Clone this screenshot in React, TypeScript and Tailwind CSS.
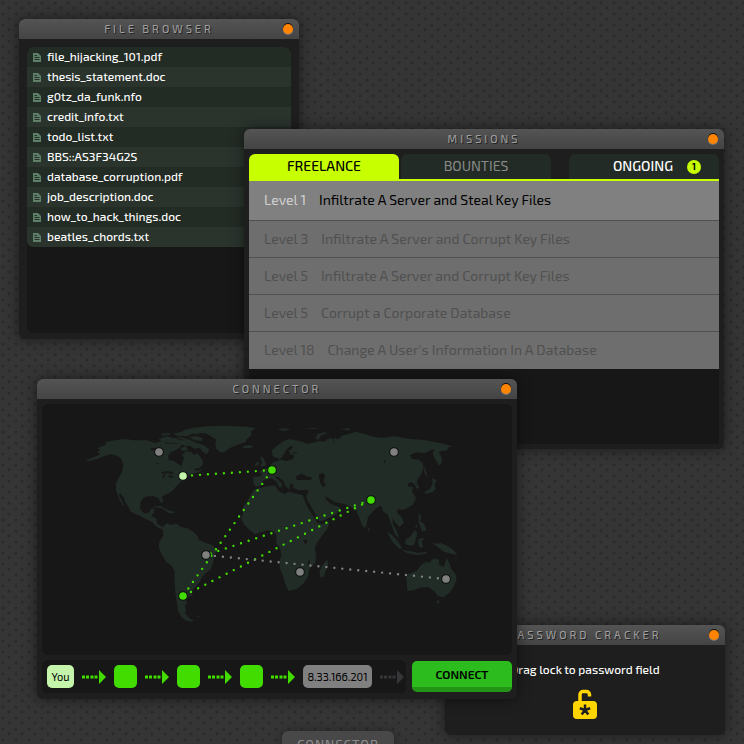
import type { ReactNode } from "react";

const FILES = [
  "file_hijacking_101.pdf",
  "thesis_statement.doc",
  "g0tz_da_funk.nfo",
  "credit_info.txt",
  "todo_list.txt",
  "BBS::AS3F34G2S",
  "database_corruption.pdf",
  "job_description.doc",
  "how_to_hack_things.doc",
  "beatles_chords.txt",
];

const MISSIONS = [
  { level: 1, name: "Infiltrate A Server and Steal Key Files" },
  { level: 3, name: "Infiltrate A Server and Corrupt Key Files" },
  { level: 5, name: "Infiltrate A Server and Corrupt Key Files" },
  { level: 5, name: "Corrupt a Corporate Database" },
  { level: 18, name: "Change A User's Information In A Database" },
];

const GREEN = "#42dc00";
const GRAY = "#808080";

const ROUTES = [
  { from: [141, 72], to: [230, 66], color: GREEN },
  { from: [230, 66], to: [141, 192], color: GREEN },
  { from: [141, 192], to: [329, 96], color: GREEN },
  { from: [329, 96], to: [164, 151], color: GREEN },
  { from: [164, 151], to: [404, 175], color: GRAY },
];

const NODES = [
  { x: 117, y: 48, color: GRAY },
  { x: 352, y: 48, color: GRAY },
  { x: 164, y: 151, color: GRAY },
  { x: 258, y: 168, color: GRAY },
  { x: 404, y: 175, color: GRAY },
  { x: 230, y: 66, color: GREEN },
  { x: 329, y: 96, color: GREEN },
  { x: 141, y: 192, color: GREEN },
  { x: 141, y: 72, color: "#c5f5ab" },
];

function Window({ title, className, children }: { title: string; className: string; children: ReactNode }) {
  return (
    <section
      aria-label={title}
      className={`absolute flex flex-col overflow-hidden rounded-md bg-[#1e1e1e] shadow-[0_0_14px_rgba(0,0,0,0.5)] ${className}`}
    >
      <header className="grid h-5 shrink-0 grid-cols-[1fr_auto_1fr] items-center bg-linear-to-b from-[#545454] to-[#444444] px-[6px]">
        <h2 className="col-start-2 text-[11px] leading-5 tracking-[3px] text-[#a0a0a0] uppercase [text-shadow:1px_1px_0_#222]">
          {title}
        </h2>
        <button
          type="button"
          aria-label={`Close ${title}`}
          className="size-[10px] justify-self-end rounded-full bg-[#ff8400] shadow-[0_-1px_0_#111,0_1px_0_#777]"
        />
      </header>
      {children}
    </section>
  );
}

function FileIcon() {
  return (
    <svg viewBox="0 0 8 10" className="h-[10px] w-2" aria-hidden="true">
      <path d="M0 1h5l3 3v6H0z" fill="#5e8068" />
      <path d="M1.500 3.500h2.500M1.500 5.500h5M1.500 7.500h5" stroke="#27312a" strokeWidth="1" />
    </svg>
  );
}

function Arrow({ dim = false }: { dim?: boolean }) {
  return (
    <svg viewBox="0 0 24 14" className="h-[14px] w-6 shrink-0" fill={dim ? "#37373a" : GREEN} aria-hidden="true">
      <path d="M0 5.500h3v3H0zM4 5.500h3v3H4zM8.500 5.500h3v3h-3zM12.500 5.500h3v3h-3zM17 0l7 7-7 7z" />
    </svg>
  );
}

function Hop() {
  return <span className="size-[23px] shrink-0 rounded-[5px] bg-[#42dc00]" />;
}

function WorldMap() {
  return (
    <svg viewBox="0 0 470 251" className="block w-full" role="img" aria-label="World map of connections">
      <g fill="#222c27" transform="translate(38 11) scale(0.33333)">
        <path d="M15 137L45 125L60 118L50 110L62 106L52 100L80 88L75 82L105 76L135 72L160 76L200 76L225 84L245 78L262 86L290 86L300 80L312 84L300 96L290 104L272 112L264 122L266 134L282 138L294 146L304 154L308 140L312 128L306 120L318 108L334 110L342 120L352 114L366 132L370 148L360 158L340 162L352 168L372 160L356 172L336 176L320 188L308 196L296 206L282 222L274 230L262 236L246 244L250 262L242 264L236 250L222 244L205 244L190 248L182 260L180 278L186 290L196 296L208 292L212 282L224 280L220 294L214 304L228 310L232 326L244 334L250 338L240 342L226 332L216 320L196 312L180 302L164 296L150 288L146 276L136 262L130 246L120 234L116 240L128 262L134 276L126 268L116 248L108 226L108 206L116 188L126 172L130 150L124 132L112 122L94 118L76 122L50 132L28 138Z" />
        <path d="M236 72L262 64L280 70L300 66L330 74L350 84L372 90L388 104L380 118L366 108L358 98L344 102L330 92L316 94L300 84L270 84L246 80Z" />
        <path d="M280 56L304 50L316 44L340 40L372 42L366 50L352 58L336 56L320 64L290 62ZM246 56L272 54L266 60L246 62ZM326 66L350 64L368 70L366 78L344 76ZM300 100L318 94L324 104L310 108Z" />
        <path d="M330 40L380 34L440 32L500 35L528 40L512 50L516 60L500 72L496 82L470 90L448 100L432 112L420 112L408 100L406 84L410 74L396 66L380 56L360 54L345 48Z" />
        <path d="M244 340L262 324L270 330L290 326L304 336L322 340L340 350L352 362L356 374L372 382L396 390L412 404L402 420L400 440L392 462L378 474L366 486L360 500L346 516L334 530L338 540L322 548L314 552L322 562L314 572L318 584L314 594L324 604L330 612L342 616L334 620L316 616L304 606L294 586L290 560L286 530L284 500L284 470L276 454L258 440L246 420L236 396L238 380L248 366L250 350Z" />
        <path d="M216 276L240 272L262 284L286 292L270 296L246 280ZM488 94L510 90L520 96L504 100L490 98ZM352 602h6v4h-6z" />
        <path
          fill="#171717"
          d="M244 172L262 168L280 172L276 178L262 174L246 176ZM252 178L258 176L250 190L246 188ZM266 178L274 182L284 186L268 188ZM284 66L300 72L318 76L298 76ZM210 100L226 98L232 106L216 106ZM230 144h6v4h-6z"
        />
      </g>
      <g fill="#222c27" transform="translate(198 11) scale(0.33333)">
        <path d="M96 106L112 92L130 78L150 72L176 78L192 82L200 86L220 84L235 78L255 80L262 72L275 70L284 84L280 70L296 72L306 62L330 56L346 50L372 56L400 66L430 68L465 64L510 72L548 74L580 80L610 86L636 94L624 98L622 106L606 108L596 112L604 124L606 140L598 152L590 140L582 126L578 112L586 102L570 106L556 114L530 112L510 120L516 132L536 134L548 144L550 160L544 178L534 190L530 204L538 218L530 222L524 208L514 202L502 206L506 216L520 216L516 228L528 250L518 270L500 280L488 286L474 282L470 292L486 308L492 324L478 336L462 318L456 308L460 330L472 352L478 368L466 360L458 340L450 318L444 300L430 290L424 272L412 276L398 290L384 306L380 328L374 340L366 330L356 304L348 286L336 278L322 270L300 264L284 262L270 252L256 244L258 254L274 268L288 272L302 278L288 298L268 308L246 318L238 318L228 300L214 276L202 254L198 244L206 232L202 224L176 226L160 218L158 206L150 208L148 224L136 212L128 196L112 184L106 186L124 204L128 214L118 218L110 200L98 192L82 190L70 196L60 214L46 214L40 206L40 186L62 184L66 176L56 170L72 164L88 154L100 142L118 136L114 124L122 116L120 134L140 138L160 132L162 118L152 120L146 108L160 98L152 92L138 106L130 120L124 130L110 128L98 124Z" />
        <path d="M42 224L60 218L90 212L108 212L114 228L136 238L144 230L170 236L188 240L196 262L208 286L220 304L232 324L246 328L268 322L262 342L246 362L232 382L224 400L228 420L226 444L208 462L204 484L190 506L170 522L146 528L138 512L130 486L120 460L118 440L124 420L120 400L108 384L110 360L104 352L86 346L66 350L46 358L30 346L14 330L4 312L8 296L10 274L24 256L32 240Z" />
        <path d="M262 432L264 448L252 484L242 488L238 472L246 452ZM382 334L390 344L384 350ZM588 558L600 556L594 568Z" />
        <path d="M500 488L504 478L530 468L544 450L560 440L568 444L580 430L598 434L596 448L612 456L620 428L628 444L634 462L646 476L650 492L642 514L630 532L612 546L594 544L584 530L566 516L540 518L520 526L502 528Z" />
        <path d="M440 350L454 358L476 382L486 400L478 402L460 384ZM484 404L510 408L534 414L560 410L560 416L530 420L500 414ZM496 374L510 366L524 346L532 352L528 372L522 390L506 392L496 386ZM536 372L556 368L544 378L550 396L540 398L534 384ZM574 382L590 386L602 384L624 394L640 404L652 420L634 416L612 410L598 400ZM536 294L544 306L540 318L552 326L560 346L546 350L536 320ZM524 338L534 326L530 338Z" />
        <path d="M552 232L570 222L578 206L576 190L590 196L584 206L586 222L578 232L558 236ZM550 150L558 168L562 186L554 176Z" />
        <path d="M60 124L70 128L78 146L76 154L60 154L66 144ZM46 146L56 138L56 150L44 154ZM112 44L130 40L152 42L134 48ZM226 72L232 58L252 52L262 54L242 62L236 74ZM190 40L240 38L220 42ZM300 42L328 40L330 46Z" />
        <path
          fill="#171717"
          d="M168 184L186 176L200 184L216 188L212 196L186 194L170 196ZM236 178L250 174L256 184L250 196L258 212L248 216L240 202ZM430 146L434 132L436 140ZM190 374L202 376L200 386L192 384ZM202 448L208 430L210 450ZM158 112h14v3h-14z"
        />
      </g>
      {ROUTES.map((r, i) => (
        <line
          key={i}
          x1={r.from[0]}
          y1={r.from[1]}
          x2={r.to[0]}
          y2={r.to[1]}
          stroke={r.color}
          strokeWidth="2.4"
          strokeLinecap="round"
          strokeDasharray="0 8"
          strokeDashoffset="-1"
        />
      ))}
      {NODES.map((n, i) => (
        <circle key={i} cx={n.x} cy={n.y} r="4.400" fill={n.color} stroke="#101510" strokeWidth="1.200" />
      ))}
    </svg>
  );
}

export default function App() {
  return (
    <main className="relative h-screen overflow-hidden bg-[#353535] bg-[radial-gradient(circle_at_3px_3px,#2b2b2b_1px,transparent_2px),radial-gradient(circle_at_9px_8px,#2b2b2b_1px,transparent_2px)] bg-size-[13px_11px] font-['Exo_2','Exo','Roboto',sans-serif]">
      <Window title="File Browser" className="top-[19px] left-[19px] h-80 w-[280px]">
        <div className="mx-2 mt-2 mb-[6px] flex-1 overflow-hidden rounded-md bg-[#171717]">
          <ul className="overflow-hidden rounded-md">
            {FILES.map((file) => (
              <li key={file} className="flex h-5 items-center gap-[6px] bg-[#232b25] pl-[6px] even:bg-[#2a342d]">
                <FileIcon />
                <span className="pb-[2px] text-xs leading-[18px] font-medium text-white">{file}</span>
              </li>
            ))}
          </ul>
        </div>
      </Window>

      <Window title="Missions" className="top-[129px] left-[244px] h-80 w-[480px]">
        <div className="mx-[5px] mt-[5px] mb-[5px] flex flex-1 flex-col bg-[#171717]">
          <div role="tablist" className="flex border-b-2 border-[#c8ff00] bg-[#1e1e1e] text-sm leading-6">
            <button type="button" role="tab" aria-selected="true" className="h-[25px] w-[150px] rounded-t-md bg-[#c8ff00] pb-[2px] font-medium text-black">
              FREELANCE
            </button>
            <button type="button" role="tab" aria-selected="false" className="ml-[2px] h-[25px] w-[150px] rounded-t-md bg-[#222b25] pb-[2px] text-[#8a8a8a]">
              BOUNTIES
            </button>
            <button type="button" role="tab" aria-selected="false" className="ml-auto flex h-[25px] w-[150px] items-center justify-end gap-[14px] rounded-t-md bg-[#222b25] pr-[18px] font-medium text-white">
              <span className="pb-[2px]">ONGOING</span>
              <span className="size-[14px] rounded-full bg-[#c8ff00] text-[9px] leading-[14px] font-bold text-black">1</span>
            </button>
          </div>
          <ul className="text-sm">
            {MISSIONS.map((m, i) => (
              <li
                key={i}
                className="flex h-[37px] items-center gap-[13px] border-b border-[#505050] bg-[#6e6e6e] pl-[15px] text-[#505050] first:h-10 first:bg-[#808080] first:pb-[2px] first:text-black last:border-[#6e6e6e]"
              >
                <span className={i === 0 ? "text-[#d0d0d0]" : ""}>Level {m.level}</span>
                <span>{m.name}</span>
              </li>
            ))}
          </ul>
        </div>
      </Window>

      <Window title="Password Cracker" className="top-[625px] left-[445px] h-[110px] w-[280px]">
        <div className="flex flex-1 flex-col items-center gap-[10px] pt-[14px]">
          <p className="text-xs leading-5 font-medium text-white">Drag lock to password field</p>
          <svg viewBox="0 0 24 30" className="h-[30px] w-6" aria-hidden="true">
            <path d="M7 13V5.500a3 3 0 0 1 3-3h3.500a3 3 0 0 1 3 3V7.500" fill="none" stroke="#ffd500" strokeWidth="3.500" />
            <rect y="12" width="24" height="18" rx="4" fill="#ffd500" />
            <path d="M12 21V15.500M12 21l5.200-1.700M12 21l3.300 4.500M12 21l-3.300 4.500M12 21l-5.200-1.700" stroke="#1e1e1e" strokeWidth="2.500" />
          </svg>
        </div>
      </Window>

      <Window title="Connector" className="top-[379px] left-[37px] h-80 w-[480px]">
        <div className="m-[5px] overflow-hidden rounded-md bg-[#171717]">
          <WorldMap />
        </div>
        <div className="mx-[5px] flex items-start gap-[6px]">
          <div className="flex h-[33px] min-w-0 flex-1 items-center gap-2 rounded-md bg-[#171717] px-[5px] text-[11px] leading-[23px] text-black">
            <span className="h-[23px] w-[27px] shrink-0 rounded-[5px] bg-[#c5f5ab] text-center">You</span>
            <Arrow />
            <Hop />
            <Arrow />
            <Hop />
            <Arrow />
            <Hop />
            <Arrow />
            <span className="h-[23px] w-[69px] shrink-0 rounded-[5px] bg-[#808080] text-center">8.33.166.201</span>
            <Arrow dim />
          </div>
          <button type="button" className="mt-px h-[31px] w-[100px] shrink-0 rounded-[5px] border-b-[5px] border-[#249417] bg-[#2cbc1d] text-xs leading-[26px] font-semibold text-black">
            CONNECT
          </button>
        </div>
      </Window>

      <button
        type="button"
        className="absolute top-[731px] left-[282px] h-7 w-28 rounded-md bg-[#484848] text-[13px] leading-6 tracking-[1px] text-[#8c8c8c] shadow-[0_0_8px_rgba(0,0,0,0.3)]"
      >
        CONNECTOR
      </button>
    </main>
  );
}
